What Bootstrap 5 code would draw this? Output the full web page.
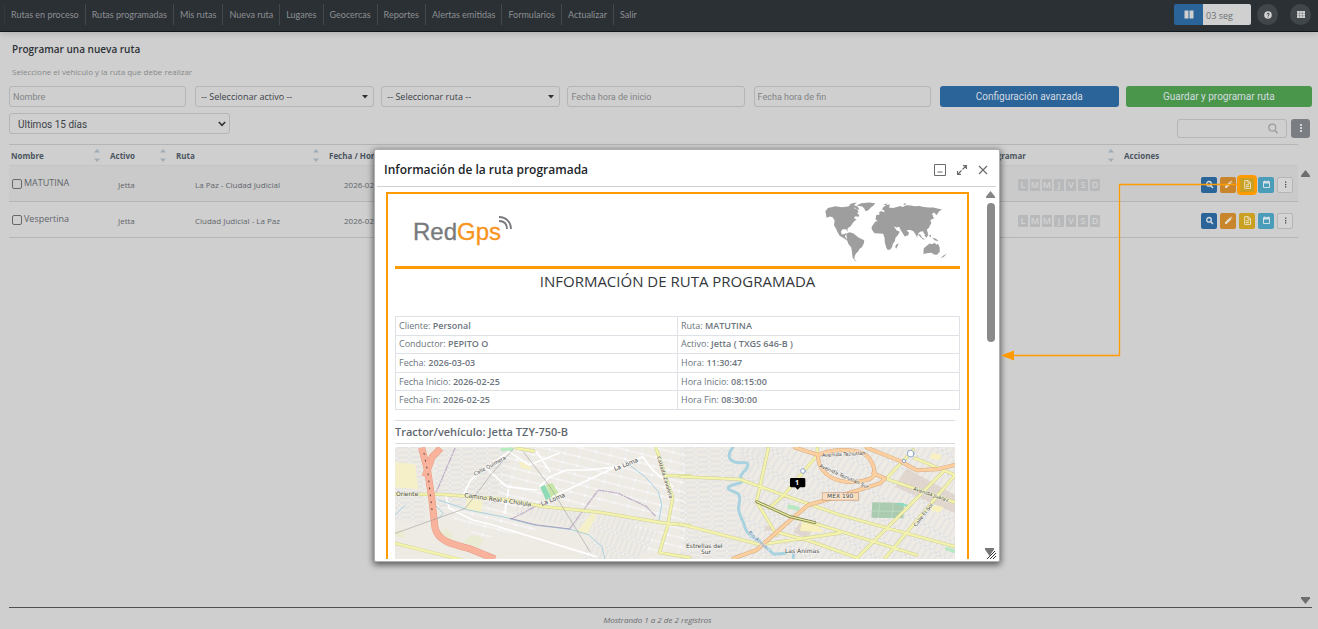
<!DOCTYPE html>
<html lang="es">
<head>
<meta charset="utf-8">
<meta name="viewport" content="width=device-width, initial-scale=1">
<title>Programar una nueva ruta</title>
<link href="https://cdn.jsdelivr.net/npm/bootstrap@5.3.0/dist/css/bootstrap.min.css" rel="stylesheet">
<style>
  :root { --amber: #ff9b00; --page: #cfcfcf; --line: #b3b5b7; }
  body { background: var(--page); font-family: "Open Sans", "Noto Sans", sans-serif; font-size: 8px; line-height: 12px; color: #55595d; }
  svg { display: block; }
  .topbar { background: #2b3035; height: 32px; border-bottom: 1px solid #11161a; box-shadow: 0 2px 6px rgba(0,0,0,.14); padding: 0 7px 2px 4px; }
  .topbar .nav-link { color: #8b8f92; font-family: Lato, "Open Sans", sans-serif; font-size: 9px; padding: 5px 6px 4px; line-height: 12px; border-left: 1px solid #43484c; }
  .topbar .nav-item:first-child .nav-link { border-color: #33383c; }
  .timer-btn { width: 29px; height: 21px; background: #2a6499; border-radius: 2px 0 0 2px; }
  .timer-box { width: 48px; height: 21px; background: #d0d0d0; color: #6d7072; border-radius: 0 2px 2px 0; padding: 2px 3px 0; font-size: 9px; border: 0; margin-right: 6px; }
  .round-btn { width: 21px; height: 21px; border-radius: 50%; background: #41464b; }
  .round-btn + .round-btn { margin-left: 12px; }
  .plain-btn { border: 0; padding: 0; display: flex; align-items: center; justify-content: center; flex: none; }
  .content-area { padding: 9px 6px 0 9px; }
  .page-title { font-size: 10px; line-height: 16px; font-weight: 600; color: #2d3136; margin: 0 0 9px 3px; }
  .page-hint { color: #85888a; margin: 0 0 8px 3px; }
  .filters { display: grid; grid-template-columns: repeat(7, minmax(0, 1fr)); }
  .filters > div { padding-right: 7px; }
  .filters > div:last-child { padding-right: 0; }
  .filters > .text-cell { padding-right: 9px; }
  .field-box { width: 100%; height: 21px; border: 1px solid var(--line); border-radius: 3px; background-color: transparent; color: #3d4247; font-size: 9px; padding: 0 3px; display: block; }
  input.field-box { font-family: Roboto, sans-serif; }
  .field-box::placeholder { color: #818486; }
  select.field-box { appearance: none; padding: 0 5px; background-image: url("data:image/svg+xml,%3Csvg xmlns='http://www.w3.org/2000/svg' width='6' height='4'%3E%3Cpath d='M0 0h6L3 3.6z' fill='%23333'/%3E%3C/svg%3E"); background-repeat: no-repeat; background-position: right 5px center; }
  select.range-box { width: 221px; font-family: Roboto, sans-serif; font-size: 10px; padding: 2px 8px 0; background-image: url("data:image/svg+xml,%3Csvg xmlns='http://www.w3.org/2000/svg' width='8' height='6'%3E%3Cpath d='M.8 1l3.2 3.4L7.200 1' fill='none' stroke='%23333' stroke-width='1.600'/%3E%3C/svg%3E"); background-position: right 3px center; }
  .action-btn { width: 100%; height: 21px; border: 0; border-radius: 3px; color: #d5dbe0; font-family: Roboto, sans-serif; font-size: 10px; }
  .blue { background: #2a6499; } .green { background: #4a964a; }
  .period-row { padding: 6px 2px 6px 0; }
  .finder { width: 110px; height: 19px; }
  .finder input { height: 19px; padding-right: 22px; }
  .finder svg { position: absolute; right: 9px; top: 4px; }
  .more-btn { width: 19px; height: 19px; border-radius: 3px; background: #7a7e82; }
  .routes { table-layout: fixed; width: 100%; border-collapse: separate; border-spacing: 0; }
  .routes th { height: 22px; border-top: 1px solid var(--line); border-bottom: 1px solid #c3c4c5; padding: 1px 8px 0 2px; color: #4b5561; font-weight: 700; }
  .routes td { height: 36px; border-bottom: 1px solid var(--line); padding: 2px 5px 0 10px; color: #60656a; white-space: nowrap; }
  .routes tbody tr:first-child td { background: #cacaca; }
  .routes td:first-child { padding: 0 3px; }
  .routes .c-name { width: 99px; } .routes .c-asset { width: 66px; } .routes .c-route { width: 153px; } .routes .c-prog { width: 141px; } .routes .c-act { width: 176px; }
  .routes td.ind-2 { padding-left: 21px; } .routes td.ind-3 { padding-left: 17px; } .routes td.ind-4 { padding-left: 37px; }
  .routes label { font-size: 9px; line-height: 14px; margin-bottom: 2px; }
  .pick { gap: 2px; } .days { gap: 2px; } .tools { gap: 3px; }
  .tick { width: 10px; height: 10px; margin: 0; appearance: none; border: 1px solid #66696c; border-radius: 2px; flex: none; }
  .day { width: 10px; height: 12px; background: #b8b9ba; color: #d3d3d3; font-size: 9px; font-weight: 600; text-align: center; border-radius: 1px; }
  .ic { width: 16px; height: 16px; border-radius: 2px; }
  .orange { background: #c9852b; } .gold { background: #c9a021; } .cyan { background: #4a9db8; } .blank { background: #d4d4d4; outline: 1px solid #b5b5b5; outline-offset: -1px; }
  .marked { box-shadow: 0 0 0 2px var(--amber), inset 0 0 0 1px var(--amber); }
  .table-zone { padding-right: 14px; position: relative; }
  .zone-bar { position: absolute; right: 2px; top: 26px; bottom: 3px; }
  .foot-line { border-top: 1px solid #4e5154; text-align: center; font-style: italic; padding: 6px 6px 3px 0; color: #676a6d; }
  .overlay { position: absolute; inset: 149px 0 67px; padding-left: 56px; z-index: 5; pointer-events: none; }
  .win { width: 626px; background: #fff; border: 1px solid #aeb0b2; border-radius: 2px; box-shadow: 0 2px 6px 1px rgba(0,0,0,.55); padding: 0 3px 2px 2px; pointer-events: auto; }
  .win-head { height: 37px; border-bottom: 1px solid #cfd1d3; padding: 3px 8px 0 7px; flex: none; }
  .win-title { font-size: 12px; line-height: 18px; font-weight: 600; color: #212529; margin: 0; }
  .win-head button { background: none; }
  .win-tools { gap: 11px; }
  .report { margin: 5px 16px 0 9px; border: 2px solid var(--amber); border-bottom: 0; padding: 6px 7px 0; overflow: hidden; color: #6c757d; }
  .report-head { border-bottom: 3px solid var(--amber); height: 69px; padding: 0 3px 2px 18px; }
  .report-title { font-size: 15px; line-height: 20px; text-align: center; color: #33373b; margin: 2px 0 25px; font-weight: 400; }
  .facts { width: 100%; height: 94px; table-layout: fixed; border-collapse: collapse; font-size: 9px; }
  .facts td { border: 1px solid #dee2e6; padding: 2px 3px; line-height: 12px; }
  .facts b { font-weight: 600; }
  .unit { font-size: 11px; line-height: 22px; font-weight: 600; border-top: 1px solid #dadcde; border-bottom: 1px solid #dadcde; margin: 10px 5px 3px 0; height: 24px; color: #5f6870; }
  .map { width: calc(100% - 5px); }
  .win-bar { width: 11px; padding-top: 4px; }
  .thumb { width: 8px; height: 139px; border-radius: 4px; background: #8a8a8a; margin-top: 5px; }
  .link-line { position: absolute; right: 79px; top: 180px; z-index: 6; pointer-events: none; }
</style>
</head>
<body class="vh-100 d-flex flex-column overflow-hidden position-relative">

<nav class="topbar d-flex align-items-center flex-shrink-0">
  <ul class="nav flex-nowrap me-auto">
    <li class="nav-item"><a class="nav-link" href="#">Rutas en proceso</a></li>
    <li class="nav-item"><a class="nav-link" href="#">Rutas programadas</a></li>
    <li class="nav-item"><a class="nav-link" href="#">Mis rutas</a></li>
    <li class="nav-item"><a class="nav-link" href="#">Nueva ruta</a></li>
    <li class="nav-item"><a class="nav-link" href="#">Lugares</a></li>
    <li class="nav-item"><a class="nav-link" href="#">Geocercas</a></li>
    <li class="nav-item"><a class="nav-link" href="#">Reportes</a></li>
    <li class="nav-item"><a class="nav-link" href="#">Alertas emitidas</a></li>
    <li class="nav-item"><a class="nav-link" href="#">Formularios</a></li>
    <li class="nav-item"><a class="nav-link" href="#">Actualizar</a></li>
    <li class="nav-item"><a class="nav-link" href="#">Salir</a></li>
  </ul>
  <button class="plain-btn timer-btn" aria-label="Pausar"><svg width="10" height="9"><path d="M.5.500h4v8h-4zM5.500.500h4v8h-4z" fill="#d0d0d0"/></svg></button>
  <input class="timer-box" value="03 seg" aria-label="Tiempo">
  <button class="plain-btn round-btn" aria-label="Ayuda"><svg width="8" height="8" viewBox="0 0 8 8"><circle cx="4" cy="4" r="3.800" fill="#d3d3d3"/><path d="M2.900 3.200C3 1.900 5.200 1.900 5.200 3.200 5.200 4 4.100 4 4.100 4.900M4.100 5.600v.9" fill="none" stroke="#333" stroke-width="1"/></svg></button>
  <button class="plain-btn round-btn" aria-label="Aplicaciones"><svg width="8" height="7" viewBox="0 0 8 7"><path d="M0 0h8v7H0z" fill="#d3d3d3"/><path d="M0 2.300h8M0 4.700h8M2.600 0v7M5.400 0v7" stroke="#7b7e80" stroke-width=".5"/></svg></button>
</nav>

<main class="content-area flex-grow-1 d-flex flex-column">
  <h1 class="page-title">Programar una nueva ruta</h1>
  <p class="page-hint">Seleccione el vehículo y la ruta que debe realizar</p>

  <div class="filters">
    <div class="text-cell"><input class="field-box" placeholder="Nombre" aria-label="Nombre"></div>
    <div><select class="field-box" aria-label="Activo"><option>-- Seleccionar activo --</option></select></div>
    <div><select class="field-box" aria-label="Ruta"><option>-- Seleccionar ruta --</option></select></div>
    <div class="text-cell"><input class="field-box" placeholder="Fecha hora de inicio" aria-label="Fecha hora de inicio"></div>
    <div class="text-cell"><input class="field-box" placeholder="Fecha hora de fin" aria-label="Fecha hora de fin"></div>
    <div><button class="action-btn blue">Configuración avanzada</button></div>
    <div><button class="action-btn green">Guardar y programar ruta</button></div>
  </div>

  <div class="period-row d-flex justify-content-between align-items-end">
    <select class="field-box range-box mb-1" aria-label="Periodo"><option>Últimos 15 días</option></select>
    <div class="d-flex gap-1">
      <div class="finder position-relative"><input class="field-box" type="search" aria-label="Buscar"><svg width="10" height="11" viewBox="0 0 10 11"><circle cx="4.300" cy="4.600" r="3.500" fill="none" stroke="#9a9c9e" stroke-width="1.200"/><path d="M7 7.400l2.600 2.800" stroke="#9a9c9e" stroke-width="1.500"/></svg></div>
      <button class="plain-btn more-btn" aria-label="Más opciones"><svg width="2" height="9"><path d="M0 0h2v2H0zM0 3h2v2H0zM0 6h2v2H0z" fill="#d3d3d3"/></svg></button>
    </div>
  </div>

  <div class="table-zone flex-grow-1">
    <table class="routes">
      <thead>
        <tr>
          <th class="c-name"><div class="d-flex justify-content-between align-items-center">Nombre <svg width="6" height="13"><use href="#sort"/></svg></div></th>
          <th class="c-asset"><div class="d-flex justify-content-between align-items-center">Activo <svg width="6" height="13"><use href="#sort"/></svg></div></th>
          <th class="c-route"><div class="d-flex justify-content-between align-items-center">Ruta <svg width="6" height="13"><use href="#sort"/></svg></div></th>
          <th>Fecha / Hora</th>
          <th class="c-prog"><div class="d-flex justify-content-between align-items-center">Programar <svg width="6" height="13"><use href="#sort"/></svg></div></th>
          <th class="c-act">Acciones</th>
        </tr>
      </thead>
      <tbody>
        <tr>
          <td><div class="pick d-flex align-items-center"><input class="tick" type="checkbox" id="r1"><label for="r1">MATUTINA</label></div></td>
          <td>Jetta</td>
          <td class="ind-2">La Paz - Ciudad Judicial</td>
          <td class="ind-3">2026-02-25</td>
          <td class="ind-4"><div class="days d-flex"><span class="day">L</span><span class="day">M</span><span class="day">M</span><span class="day">J</span><span class="day">V</span><span class="day">S</span><span class="day">D</span></div></td>
          <td><div class="tools d-flex justify-content-end">
            <button class="plain-btn ic blue" aria-label="Ver"><svg width="9" height="9"><use href="#lens"/></svg></button>
            <button class="plain-btn ic orange" aria-label="Editar"><svg width="9" height="9"><use href="#pen"/></svg></button>
            <button class="plain-btn ic gold marked" aria-label="Informe"><svg width="9" height="9"><use href="#doc"/></svg></button>
            <button class="plain-btn ic cyan" aria-label="Calendario"><svg width="9" height="9"><use href="#cal"/></svg></button>
            <button class="plain-btn ic blank" aria-label="Más"><svg width="9" height="9"><use href="#dots"/></svg></button>
          </div></td>
        </tr>
        <tr>
          <td><div class="pick d-flex align-items-center"><input class="tick" type="checkbox" id="r2"><label for="r2">Vespertina</label></div></td>
          <td>Jetta</td>
          <td class="ind-2">Ciudad Judicial - La Paz</td>
          <td class="ind-3">2026-02-25</td>
          <td class="ind-4"><div class="days d-flex"><span class="day">L</span><span class="day">M</span><span class="day">M</span><span class="day">J</span><span class="day">V</span><span class="day">S</span><span class="day">D</span></div></td>
          <td><div class="tools d-flex justify-content-end">
            <button class="plain-btn ic blue" aria-label="Ver"><svg width="9" height="9"><use href="#lens"/></svg></button>
            <button class="plain-btn ic orange" aria-label="Editar"><svg width="9" height="9"><use href="#pen"/></svg></button>
            <button class="plain-btn ic gold" aria-label="Informe"><svg width="9" height="9"><use href="#doc"/></svg></button>
            <button class="plain-btn ic cyan" aria-label="Calendario"><svg width="9" height="9"><use href="#cal"/></svg></button>
            <button class="plain-btn ic blank" aria-label="Más"><svg width="9" height="9"><use href="#dots"/></svg></button>
          </div></td>
        </tr>
      </tbody>
    </table>
    <div class="zone-bar d-flex flex-column justify-content-between">
      <svg width="9" height="7"><path d="M4.500 0L9 5.500V7H0V5.500z" fill="#6e6e6e"/></svg>
      <svg width="9" height="7"><path d="M4.500 7L9 1.500V0H0v1.500z" fill="#6e6e6e"/></svg>
    </div>
  </div>
  <footer class="foot-line">Mostrando 1 a 2 de 2 registros</footer>
</main>

<svg class="link-line" width="238" height="182" viewBox="0 0 238 182"><path d="M237 4.500H118.500V175.500H13" fill="none" stroke="#ff9b00" stroke-width="1.300"/><path d="M0 175.500l13-5v10z" fill="#ff9b00"/></svg>

<div class="overlay d-flex justify-content-center">
  <section class="win d-flex flex-column" role="dialog" aria-labelledby="win-title">
    <header class="win-head d-flex align-items-center">
      <h2 class="win-title me-auto" id="win-title">Información de la ruta programada</h2>
      <div class="win-tools d-flex align-items-center">
        <button class="plain-btn" aria-label="Minimizar"><svg width="12" height="12"><path d="M1 .5h10.500v11H.500V.500zM3.500 8h5" fill="none" stroke="#6b6b6b"/></svg></button>
        <button class="plain-btn" aria-label="Maximizar"><svg width="10" height="10"><path d="M1 9l3.500-3.500M5.500 4.500L9 1M6 .6h3.400V4M.6 6v3.400H4" fill="none" stroke="#6b6b6b" stroke-width="1.100"/></svg></button>
        <button class="plain-btn" aria-label="Cerrar"><svg width="10" height="10"><path d="M1 1l8 8M9 1L1 9" fill="none" stroke="#6b6b6b" stroke-width="1.200"/></svg></button>
      </div>
    </header>
    <div class="d-flex flex-grow-1 overflow-hidden">
      <article class="report flex-grow-1">
        <div class="report-head d-flex justify-content-between align-items-center">
          <svg width="102" height="40" role="img" aria-label="RedGps" font-family="Liberation Sans, sans-serif" font-size="24"><text x="0" y="28" fill="#77797c" stroke="#77797c" stroke-width=".3">Red<tspan fill="#f7941d" stroke="#f7941d">Gps</tspan></text><path d="M86 9c5 0 8 3 8 8M86 5c7 0 12 5 12 12" fill="none" stroke="#77797c" stroke-width="1.800"/></svg>
          <svg width="133" height="62" viewBox="430 165 400 185" fill="#9e9e9e"><path d="M434 195l8-10 22-5 20 3 18-2 12-6 10 3-4 8 8 2 6 8-4 6 6 4-2 6-10-2-4 6 8 4-8 6-6 8-4 6-6 4-4 5 2 8-6-8-10 0-5 7 2 8 8 0 4-4 1 6-3 5 5 8 7 4-5 1-9-7-14-8-7-12-4-10-6-10 2-14-6-10-8-2-10 4z"/><path d="M528 178l14-7 24-2 18 2-5 7-8 6-8 8-8 3-4-8-6-6z M505 176l10-5 14-2-10 8 12 4 6 10-8-2-8-6z M497 262l10-4 12 4 8 7 8 6 16 7-1 9-6 12-6 4-6 10-6 5-4 10-1 8 8 6-7-2-6-10-2-16-2-14-9-11-4-14z M576 238l8-11 12-4 14 1 8 5 10-1 8 2 5 12 7 10 10 5-6 10-7 8-2 10-6 8-2 9-6 9-8 0-4-8-4-14-1-14-4-12-12-1-14-1-8-10-1-8z M585 220l2-13 11-3-3-6 8-4 6 4 4-4-8-4 2-6 10-8 12-1-4 9 12 1 12-3 10-3 8 3 10-5 14 1 12 2 14-1 14 3 14 2 14 0 12 3 14 3-8 4-4 6-5 7-6-8-8 4 4 8 3 5-12 6 4 8-7 14-7 7 4 10-6 6-6-4-3-8-9 2-6 5-3 11-6-10-5-8-11-4-10 2 8 7-3 7-10 4-6-9-6-10-5-10-8 2-8-4-6 1-5-6-6 0-10-4-5 5z M655 292l-4 8-4 8-3-6 4-8z M712 262l8 4 5 9 9 4-6 1-10-9z M732 268l7-7 5 5-6 9z M746 268l6-3-2 10z M755 275l12 3 8 8-12-4z M730 306l10-8 8-6 7 2 8-4 5 6 5-3 5 12 0 12-8 9-9-1-8-5-10 1-14 3z M789 328l10-5-9 10-9 3z M750 210l8-4-2 10-8 9z M734 226l6-6-2 10z M607 176l14-5-4 5z M668 173l10-3-6 7z"/></svg>
        </div>
        <h3 class="report-title">INFORMACIÓN DE RUTA PROGRAMADA</h3>
        <table class="facts">
          <tr><td>Cliente: <b>Personal</b></td><td>Ruta: <b>MATUTINA</b></td></tr>
          <tr><td>Conductor: <b>PEPITO O</b></td><td>Activo: <b>Jetta ( TXGS 646-B )</b></td></tr>
          <tr><td>Fecha: <b>2026-03-03</b></td><td>Hora: <b>11:30:47</b></td></tr>
          <tr><td>Fecha Inicio: <b>2026-02-25</b></td><td>Hora Inicio: <b>08:15:00</b></td></tr>
          <tr><td>Fecha Fin: <b>2026-02-25</b></td><td>Hora Fin: <b>08:30:00</b></td></tr>
        </table>
        <h4 class="unit">Tractor/vehículo: Jetta TZY-750-B</h4>
        <svg class="map" viewBox="0 0 560 112" role="img" aria-label="Mapa de la ruta">
          <defs>
            <pattern id="st1" width="15" height="9" patternUnits="userSpaceOnUse" patternTransform="rotate(14)"><path d="M0 1h15M1 0v9" stroke="#d0cdc8" stroke-width="2"/><path d="M0 1h15M1 0v9" stroke="#fff" stroke-width="1.300"/></pattern>
            <pattern id="st2" width="5" height="17" patternUnits="userSpaceOnUse" patternTransform="rotate(21)"><path d="M0 1h5M1 0v17" stroke="#cbc9c5" stroke-width="1.900"/><path d="M0 1h5M1 0v17" stroke="#fff" stroke-width="1"/></pattern>
            <pattern id="st3" width="13" height="5" patternUnits="userSpaceOnUse" patternTransform="rotate(-3)"><path d="M0 1h13M1 0v5" stroke="#cbc9c5" stroke-width="1.900"/><path d="M0 1h13M1 0v5" stroke="#fff" stroke-width="1"/></pattern>
            <pattern id="st4" width="6" height="18" patternUnits="userSpaceOnUse" patternTransform="rotate(32)"><path d="M0 1h6M1 0v18" stroke="#c6c4c1" stroke-width="2"/><path d="M0 1h6M1 0v18" stroke="#fff" stroke-width="1.100"/></pattern>
          </defs>
          <path fill="#eeebe5" d="M0 0h560v112H0z"/>
          <path fill="url(#st3)" d="M0 0h30v75H0zM40 0h75v60H40zM285 0h55l5 112h-60z"/>
          <path fill="url(#st1)" d="M110 0h150v60H100zM45 60h60l40 22-60 10zM200 0h90v112h-35z"/>
          <path fill="url(#st2)" d="M210 72l55 12-20 28h-60zM120 55l140 20-60 12-80-20zM330 45l60-45h-45z"/>
          <path fill="url(#st4)" d="M345 0h215v112H340z"/>
          <g transform="translate(-25 -12) scale(.333333)" fill="none" stroke-linecap="round" stroke-linejoin="round">
            <path fill="#f5f0c8" d="M76 82l60 5 8 75-68-5zM290 190l48 8-5 35-46-12zM620 290l45-55 15 5-30 60zM445 80l30 5 10 20-30-5z"/>
            <path fill="#e9ebd2" d="M210 290l20-10 20 20-5 20zM280 320l25-20 38 10-18 32zM76 285l30 5-5 20-25-5z"/>
            <path fill="#8fdbb5" d="M510 155l15-5 18 36-15 10z"/><path fill="#c8e6a8" d="M527 150l20-6 22 36-23 12z"/><path fill="#b8ecc0" d="M392 40l35-3 3 10-38 2z"/>
            <g stroke="#fff" stroke-width="5"><path d="M282 175l20-40 50-40 65-45 60 40 90-35M350 100l60 55 90 10M510 155l30-30 50-20 60 0 100-10M548 185l170-80 100-40 30 40 60 50M228 185l10 35 70 35 60 15 310 95M415 165l-10 70M500 50l40 60M230 180l50 5"/></g>
            <g stroke="#a9d2e0" stroke-width="3"><path d="M205 195l90 30 110 22 80 22 120 15 50 15 40 35 10 38M185 200l35 35-15 15M765 80l60 45 40 45 10 40-10 55M76 240l30-30"/></g>
            <g stroke="#c2b1c8" stroke-width="4" stroke-dasharray="16 5 3 5"><path d="M255 40l-60 140M425 252l85-45M600 280l85-115 60 10 85 40 28 30"/></g>
            <path d="M420 250l80 20 100 12" stroke="#a8a0c0" stroke-width="3"/>
            <path d="M76 178h140l190 15 115 22 170 17 190 32 79 8M76 325l80 20 120 30M858 38l50 150-15 85-25 80 92 15M890 122h70M440 40l50 8" stroke="#cfcf91" stroke-width="10"/>
            <path d="M76 178h140l190 15 115 22 170 17 190 32 79 8M76 325l80 20 120 30M858 38l50 150-15 85-25 80 92 15M890 122h70M440 40l50 8" stroke="#f3f3ad" stroke-width="7"/>
            <path d="M155 38l18 70 12 80 10 90c8 40 50 50 100 62l80 32M212 40l-25 25-22 60" stroke="#e39b86" stroke-width="21" stroke-linecap="butt"/>
            <path d="M155 38l18 70 12 80 10 90c8 40 50 50 100 62l80 32M212 40l-25 25-22 60" stroke="#f9b29c" stroke-width="18" stroke-linecap="butt"/>
            <path d="M76 295l210-75 80-105 65-75M460 50l80 105 120 195" stroke="#92908d" stroke-width="1.500"/>
            <path d="M162 55l12 60 12 110" stroke="#55423d" stroke-width="3" stroke-dasharray="3 18"/>
          </g>
          <g transform="translate(285 -12) scale(.333333)" fill="none" stroke-linecap="round" stroke-linejoin="round">
            <path fill="#dccfc4" fill-opacity=".7" d="M680 100l145 80v55l-180-80zM360 262l40 20-20 30-40-20zM255 272h25v15h-25z"/>
            <path fill="#f8f1bd" d="M365 262l45 5 20 25-70-5zM755 55l30 5-5 15-30-5zM755 210l35 5-10 18-30-8z"/>
            <path fill="#aacbaf" d="M577 202l95 2-2 46-96-2z"/><path d="M575 228l96 1M600 203l-5 45M640 204l-5 45" stroke="#c5decb" stroke-width="2"/>
            <path fill="#b8e8c3" d="M325 208l35 8-5 12-35-8zM795 335l30 8v12l-30-10z"/><path d="M655 206l35 8" stroke="#8bdcc0" stroke-width="6"/>
            <path d="M158 38c-20 25-8 40 10 44s40-6 35 12-28 22-20 36 0 12-25 20-10 16 8 22 14 22 10 42 14 42 18 60 16 28 38 42 40 34 50 42l35-3M340 358v14" stroke="#a8d2df" stroke-width="9"/>
            <path d="M0 125l180 8 130 47 170 60 345 95M0 267l240 62 240-35M265 40l-35 160 60 100M412 40v20l-100 120-45 40M230 200l100 45 90 25 290 90M285 290l110 30 140 50M615 130l210 72M790 110l-255 255M700 45l-80 85M825 120l-210 250M705 70l120 50" stroke="#cfcf91" stroke-width="10"/>
            <path d="M0 125l180 8 130 47 170 60 345 95M0 267l240 62 240-35M265 40l-35 160 60 100M412 40v20l-100 120-45 40M230 200l100 45 90 25 290 90M285 290l110 30 140 50M615 130l210 72M790 110l-255 255M700 45l-80 85M825 120l-210 250M705 70l120 50" stroke="#f3f3ad" stroke-width="7"/>
            <path d="M160 370l70-25 90-80 65-55 70-20 145-45 15-15-35-15M345 38l70 22c30-14 80-20 120-10s50 50 48 68-60 28-100 20-72-40-68-78M560 38l100 40 50 28 60-3 55-13" stroke="#d8aa7e" stroke-width="12"/>
            <path d="M160 370l70-25 90-80 65-55 70-20 145-45 15-15-35-15M345 38l70 22c30-14 80-20 120-10s50 50 48 68-60 28-100 20-72-40-68-78M560 38l100 40 50 28 60-3 55-13" stroke="#fbcf9f" stroke-width="9"/>
            <path d="M230 200l100 45 75 18" stroke="#77784c" stroke-width="8"/><path d="M230 200l100 45 75 18" stroke="#e9ed9e" stroke-width="4"/>
            <g stroke="#8ca6cc" stroke-width="3" fill="#fff"><circle cx="369" cy="108" r="7"/><circle cx="692" cy="56" r="10"/><circle cx="672" cy="78" r="5"/></g>
            <path d="M428 173h108v23H428z" fill="#faddbf" stroke="#c59673" stroke-width="2"/>
            <path d="M334 129h38q4 0 4 4v20q0 4-4 4h-12l-7 7-7-7h-12q-4 0-4-4v-20q0-4 4-4z" fill="#000"/>
          </g>
          <g font-family="DejaVu Sans, sans-serif" font-size="6" fill="#484742" stroke="#fff" stroke-width="1.200" stroke-opacity=".55" paint-order="stroke">
            <text x="1" y="49">Oriente</text>
            <text x="80" y="29" transform="rotate(-29 80 29)" font-size="5">Calle Quimera</text>
            <text x="69" y="50" transform="rotate(8 69 50)">Camino Real a Cholula</text>
            <text x="147" y="59" transform="rotate(-22 147 59)">La Loma</text>
            <text x="220" y="24" transform="rotate(-22 220 24)">La Loma</text>
            <text x="262" y="10" transform="rotate(73 262 10)" font-size="5">Calzada Zavaleta</text>
            <text x="291" y="101">Estrellas del</text><text x="306" y="107">Sur</text>
            <text x="390" y="106">Las Ánimas</text>
            <text x="427" y="10" transform="rotate(-3 427 10)" font-size="5">Avenida Teziutlán</text>
            <text x="424" y="20" transform="rotate(24 424 20)" font-size="5">Avenida Teziutlán Sur</text>
            <text x="518" y="43" transform="rotate(19 518 43)" font-size="5">Avenida Juárez</text>
            <text x="521" y="80" transform="rotate(-52 521 80)" font-size="5">Calle El Sol</text>
            <text x="353" y="86" transform="rotate(42 353 86)" font-size="5" fill="#527fa0">Río Atoyac</text>
            <text x="432" y="51">MEX 190</text>
          </g>
          <text x="400" y="38" fill="#fff" font-size="7" font-weight="700">1</text>
        </svg>
      </article>
      <div class="win-bar d-flex flex-column flex-shrink-0 align-items-center">
        <svg width="9" height="7"><path d="M4.500 0L9 5.500V7H0V5.500z" fill="#858585"/></svg>
        <div class="thumb"></div>
        <svg class="mt-auto" width="11" height="11"><path d="M4.500 8L9 1.500V0H0v1.500z" fill="#777"/><path d="M2 11l8-8M5 11l6-6M8 11l3-3" stroke="#333" stroke-width="1"/></svg>
      </div>
    </div>
  </section>
</div>

<svg width="0" height="0" class="position-absolute" aria-hidden="true">
  <symbol id="sort" viewBox="0 0 6 13"><path d="M3 0l3 3.500H0zM3 13l3-3.500H0z" fill="#a3adb6"/></symbol>
  <symbol id="lens" viewBox="0 0 9 9"><circle cx="4" cy="3.800" r="2.300" fill="none" stroke="#d5dde4" stroke-width="1.300"/><path d="M5.500 5.500L8 8" stroke="#d5dde4" stroke-width="1.500"/></symbol>
  <symbol id="pen" viewBox="0 0 9 9"><path d="M1 8V6.300L5.800 1.500l1.700 1.700L2.700 8zM6.300 1l.7-.6 1.600 1.600-.6.700z" fill="#e4dacb"/></symbol>
  <symbol id="doc" viewBox="0 0 9 9"><path d="M1.700.600h3.600l2.200 2.200v5.600H1.700zM5 .8v2.300h2.400M3 4.800h3M3 6.500h3" fill="none" stroke="#e8e0c4" stroke-width="1"/></symbol>
  <symbol id="cal" viewBox="0 0 9 9"><path d="M1.500 1.800h6v5.700h-6z" fill="none" stroke="#d4e2e7"/><path d="M1 1.500h7v2H1zM2.200.500h1v1h-1zM5.800.500h1v1h-1z" fill="#d4e2e7"/></symbol>
  <symbol id="dots" viewBox="0 0 9 9"><path d="M4 1.500h1.300v1.300H4zM4 3.900h1.300v1.300H4zM4 6.300h1.300v1.300H4z" fill="#444"/></symbol>
</svg>
<script src="https://cdn.jsdelivr.net/npm/bootstrap@5.3.0/dist/js/bootstrap.bundle.min.js"></script>
</body>
</html>
